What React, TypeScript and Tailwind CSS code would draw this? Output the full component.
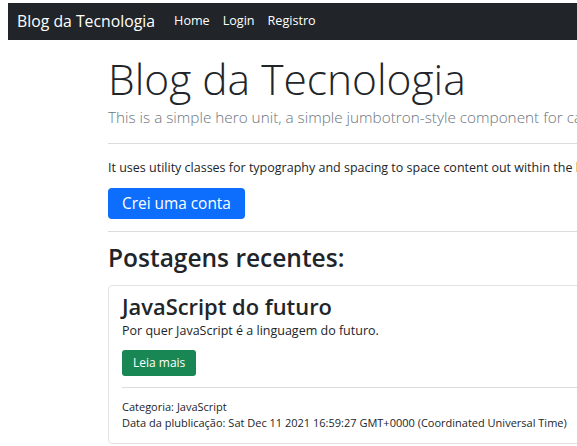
import React from "react";

const posts = [
  {
    title: "JavaScript do futuro",
    description: "Por quer JavaScript é a linguagem do futuro.",
    category: "JavaScript",
    date: "Sat Dec 11 2021 16:59:27 GMT+0000 (Coordinated Universal Time)",
  },
];

export default function App() {
  return (
    <div className="w-[577px] h-[446px] overflow-hidden bg-white font-['Open_Sans',sans-serif] text-[#212529]">
      <nav className="ml-[8px] mt-[3px] h-[37px] w-[800px] bg-[#212529] flex items-center pl-[9px]">
        <span className="text-[15.8px] text-white mr-[19px]">Blog da Tecnologia</span>
        <div className="flex gap-[13px] text-[12.6px] text-white">
          <a>Home</a>
          <a>Login</a>
          <a>Registro</a>
        </div>
      </nav>

      <main className="pl-[108px] w-[1000px] whitespace-nowrap">
        <h1 className="mt-[12px] text-[42.5px] font-light leading-[54px] text-[#212529]">
          Blog da Tecnologia
        </h1>
        <p className="text-[15.3px] font-light text-[#6c757d] leading-[22px]">
          This is a simple hero unit, a simple jumbotron-style component for calling extra attention to featured content or information.
        </p>
        <hr className="mt-[15px] border-[#dcdcdc]" />
        <p className="mt-[15px] text-[12.5px] leading-[18px]">
          It uses utility classes for typography and spacing to space content out within the larger container.
        </p>
        <button className="mt-[11px] h-[31px] px-[14px] bg-[#0d6efd] text-white text-[15.4px] rounded-[4px]">
          Crei uma conta
        </button>
        <hr className="mt-[12px] border-[#dcdcdc]" />
        <h2 className="mt-[10px] text-[24.5px] font-semibold leading-[32px]">Postagens recentes:</h2>

        {posts.map((p) => (
          <div key={p.title} className="mt-[11px] border border-[#e3e3e3] rounded-[4px] w-[900px] px-[13px] pt-[7px] pb-[12px]">
            <h3 className="text-[21.9px] font-semibold leading-[28px]">{p.title}</h3>
            <p className="mt-[1px] text-[12.5px] leading-[18px]">{p.description}</p>
            <button className="mt-[10px] h-[26px] px-[11px] bg-[#198754] text-white text-[12px] rounded-[3px]">
              Leia mais
            </button>
            <hr className="mt-[11px] border-[#dcdcdc]" />
            <p className="mt-[11px] text-[11px] leading-[16px]">Categoria: {p.category}</p>
            <p className="text-[11px] leading-[16px]">Data da plublicação: {p.date}</p>
          </div>
        ))}
      </main>
    </div>
  );
}
